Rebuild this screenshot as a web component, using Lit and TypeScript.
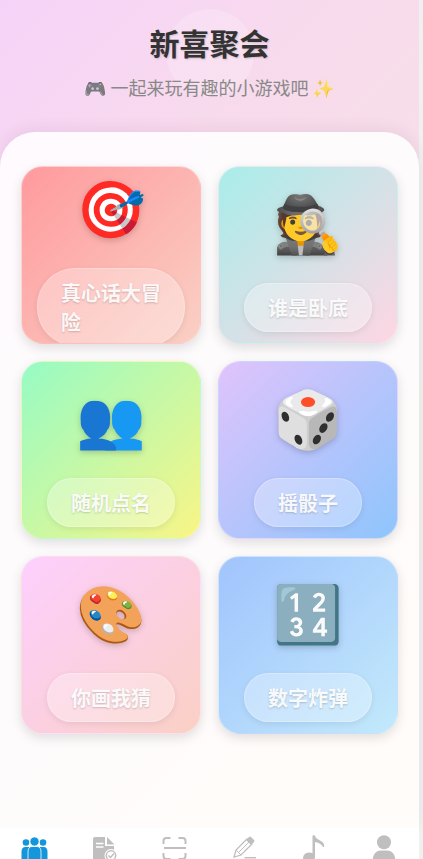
import { LitElement, html, css, svg } from "lit";
import { customElement, state } from "lit/decorators.js";
import { classMap } from "lit/directives/class-map.js";

const games = [
  { icon: "🎯", name: "真心话大冒险", tone: "truth" },
  { icon: "🕵️", name: "谁是卧底", tone: "spy" },
  { icon: "👥", name: "随机点名", tone: "pick" },
  { icon: "🎲", name: "摇骰子", tone: "dice" },
  { icon: "🎨", name: "你画我猜", tone: "draw" },
  { icon: "🔢", name: "数字炸弹", tone: "bomb" },
];

const tabs = [
  {
    label: "聚会",
    art: svg`<g fill="currentColor"><circle cx="5" cy="6.500" r="3.300"/><circle cx="22" cy="6.500" r="3.300"/><path d="M.5 24V16Q.5 11 4.500 11H8.500V24ZM26.500 24V16Q26.500 11 22.500 11H18.500V24Z"/><path d="M7 28V16Q7 10.500 11 10.500H16Q20 10.500 20 16V28Z" stroke="#fff" stroke-width=".8"/><circle cx="13.500" cy="5.500" r="4.600" stroke="#fff" stroke-width=".8"/></g>`,
  },
  {
    label: "记录",
    art: svg`<path fill="currentColor" d="M2 3Q2 1 4 1H14V10H23V14L20 28H2Z"/><path fill="currentColor" d="M16 1L23.500 8.500H16Z"/><path stroke="#fff" stroke-width="1.300" d="M5 7.500H12.500M5 11H12.500"/><circle cx="20" cy="19.500" r="6.500" fill="#fff"/><circle cx="20" cy="19.500" r="4.700" fill="#fff" stroke="currentColor" stroke-width="1.500"/><path d="M17.500 19.500L19.500 21.500L23 17.500" fill="none" stroke="currentColor" stroke-width="1.500"/>`,
  },
  {
    label: "扫码",
    art: svg`<path d="M2.500 8V5Q2.500 2 5.500 2H9.500M17.500 2H21.500Q24.500 2 24.500 5V8M2.500 17V20Q2.500 23 5.500 23H9.500M17.500 23H21.500Q24.500 23 24.500 20V17M3 12H25" fill="none" stroke="currentColor" stroke-width="2"/>`,
  },
  {
    label: "编辑",
    art: svg`<path d="M4 21L6 14L17 3L22 8L11 19Z" fill="none" stroke="currentColor" stroke-width="1.300"/><path d="M6 14L11 19M8.500 16.500L19 6" fill="none" stroke="currentColor"/><path d="M16 4L19 1Q20 0 21 1L24 4Q25 5 24 6L21 9Z" fill="currentColor"/><path d="M14.500 21.700H26" stroke="currentColor" stroke-width="1.500"/><path d="M2 23.500H26" stroke="currentColor" stroke-width=".7"/>`,
  },
  {
    label: "音乐",
    art: svg`<path d="M12.500 17.500V0Q14 -2 15 0Q15.500 2 20 4.500Q25 7 24 11H23Q21 7 15 6V21Q14.500 26 9 26Q3 26 3 21.500Q4 16.500 9.500 16.500Q11.500 16.500 12.500 17.500Z" fill="currentColor"/>`,
  },
  {
    label: "我的",
    art: svg`<g fill="currentColor"><circle cx="14" cy="6.300" r="7"/><path d="M2.500 28V24Q3.500 14.500 11 14.500H17Q24.500 14.500 25.500 24V28Z"/></g>`,
  },
];

@customElement("app-root")
export class AppRoot extends LitElement {
  @state() private active = 0;

  static styles = css`
    :host {
      display: block;
      box-sizing: border-box;
      height: 100vh;
      overflow: hidden;
      padding-right: 4px;
      background: #f0f0f0;
      font-family: "Noto Sans CJK SC", "Noto Color Emoji", sans-serif;
    }
    * {
      box-sizing: border-box;
    }
    .page {
      position: relative;
      height: 100%;
      display: flex;
      flex-direction: column;
      background: linear-gradient(135deg, #f5d3f9 0%, #f8daed 25%, #f6e0e6 55%, #fde3cd 100%);
    }
    .glow {
      position: absolute;
      top: 9px;
      left: 50%;
      width: 88px;
      height: 88px;
      margin-left: -44px;
      border-radius: 50%;
      background: rgba(255, 255, 255, 0.2);
    }
    header {
      position: relative;
      height: 132px;
      padding-top: 20px;
      text-align: center;
    }
    h1 {
      margin: 0;
      font-size: 30px;
      line-height: 44px;
      font-weight: 700;
      color: #333;
      text-shadow: 1px 1px 2px rgba(0, 0, 0, 0.15);
    }
    .tagline {
      margin: 10px 0 0;
      font-size: 18px;
      line-height: 26px;
      color: #888;
    }
    .tagline span {
      opacity: 0.8;
    }
    main {
      position: relative;
      flex: 1;
      padding: 34px 21px;
      border-radius: 35px 35px 0 0;
      background: rgba(255, 255, 255, 0.87);
      box-shadow: 0 -4px 14px rgba(100, 50, 100, 0.08);
    }
    .grid {
      display: grid;
      grid-template-columns: 1fr 1fr;
      gap: 17px;
    }
    .card {
      display: flex;
      flex-direction: column;
      align-items: center;
      justify-content: center;
      height: 178px;
      padding: 0 15px;
      overflow: hidden;
      border: 1px solid rgba(255, 255, 255, 0.3);
      border-radius: 22px;
      box-shadow: 0 4px 12px rgba(0, 0, 0, 0.12);
      font-family: inherit;
      cursor: pointer;
    }
    .truth { background-image: linear-gradient(135deg, #ff9a9e, #fad0c4); }
    .spy { background-image: linear-gradient(135deg, #a8edea, #fed6e3); }
    .pick { background-image: linear-gradient(135deg, #96fbc4, #f9f586); }
    .dice { background-image: linear-gradient(135deg, #e0c3fc, #8ec5fc); }
    .draw { background-image: linear-gradient(135deg, #fdcffe, #fad0c4); }
    .bomb { background-image: linear-gradient(135deg, #a1c4fd, #c2e9fb); }
    .icon {
      flex: none;
      height: 90px;
      margin-bottom: 14px;
      font-family: "Noto Color Emoji", sans-serif;
      font-size: 56px;
      line-height: 92px;
      color: #333;
      filter: drop-shadow(0 2px 3px rgba(0, 0, 0, 0.2));
    }
    .name {
      flex: none;
      max-width: 100%;
      padding: 9px 23px;
      border: 1px solid rgba(255, 255, 255, 0.25);
      border-radius: 38px;
      background: rgba(255, 255, 255, 0.3);
      box-shadow: 0 2px 6px rgba(0, 0, 0, 0.08);
      color: rgba(255, 255, 255, 0.92);
      font-size: 20px;
      line-height: 29px;
      font-weight: 600;
      text-align: left;
      text-shadow: 0 1px 2px rgba(0, 0, 0, 0.18);
    }
    nav {
      position: relative;
      flex: none;
      display: grid;
      grid-template-columns: repeat(6, 1fr);
      height: 31px;
      overflow: hidden;
      background: #fff;
    }
    .tab {
      display: flex;
      justify-content: center;
      align-items: flex-start;
      padding: 8px 0 0;
      border: 0;
      background: none;
      color: #bfbfbf;
      cursor: pointer;
    }
    .tab.active {
      color: #1596db;
    }
    .tab svg {
      display: block;
      width: 28px;
      height: 28px;
      flex: none;
      overflow: visible;
    }
  `;

  render() {
    return html`
      <div class="page">
        <div class="glow"></div>
        <header>
          <h1>新喜聚会</h1>
          <p class="tagline"><span>🎮</span> 一起来玩有趣的小游戏吧 <span>✨</span></p>
        </header>
        <main>
          <div class="grid">
            ${games.map(
              (g) => html`<button class="card ${g.tone}">
                <span class="icon">${g.icon}</span>
                <span class="name">${g.name}</span>
              </button>`
            )}
          </div>
        </main>
        <nav>
          ${tabs.map(
            (t, i) => html`<button
              class=${classMap({ tab: true, active: i === this.active })}
              aria-label=${t.label}
              @click=${() => (this.active = i)}
            >
              <svg viewBox="0 0 28 28" aria-hidden="true">${t.art}</svg>
            </button>`
          )}
        </nav>
      </div>
    `;
  }
}
